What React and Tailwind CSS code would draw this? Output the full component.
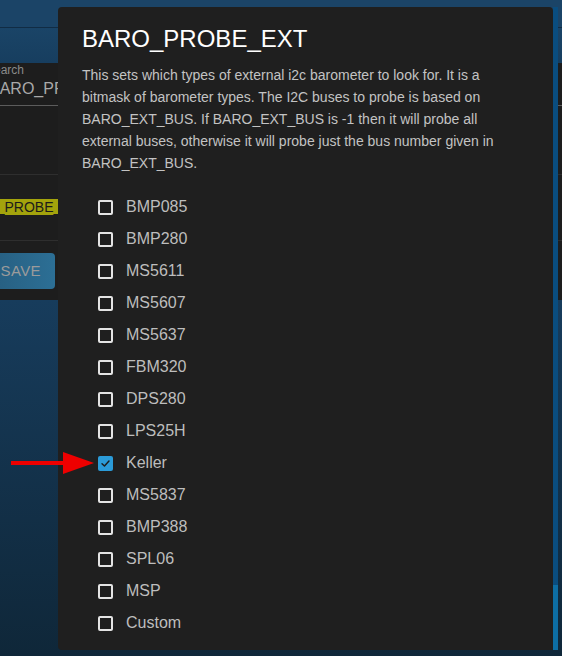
const SENSORS = [
  "BMP085",
  "BMP280",
  "MS5611",
  "MS5607",
  "MS5637",
  "FBM320",
  "DPS280",
  "LPS25H",
  "Keller",
  "MS5837",
  "BMP388",
  "SPL06",
  "MSP",
  "Custom",
]

const CHECKED = ["Keller"]

function Checkbox({ checked }) {
  if (checked) {
    return (
      <span className="flex size-[15px] items-center justify-center rounded-[2px] bg-[#2b9bd8]">
        <svg width="11" height="11" viewBox="0 0 12 12" fill="none">
          <path d="M2.2 6.2 L4.9 8.8 L9.8 3.4" stroke="#1d1d1d" strokeWidth="1.6" strokeLinecap="round" strokeLinejoin="round" />
        </svg>
      </span>
    )
  }
  return <span className="box-border size-[15px] rounded-[2px] border-2 border-[#e4e4e4]" />
}

// dimmed settings page peeking out behind the dialog
function BackPage() {
  return (
    <div className="flex h-full flex-col">
      <div className="h-[27px] bg-[#1b4467]" />
      <div className="h-px bg-[#112c44]" />
      <div className="h-[35px] bg-gradient-to-b from-[#1a4467] to-[#173e5f]" />
      <div className="flex h-[237px] flex-col bg-[#1d1d1d]">
        <div className="ml-[-14px] text-[12px] leading-[14px] text-[#8a8a8a]">Search</div>
        <div className="ml-[-11px] mt-[2px] text-[16px] leading-[20px] text-[#a9a9a9]">BARO_PROBE_EXT</div>
        <div className="mt-[6px] h-px bg-[#5c5c5c]" />
        <div className="mt-[68px] h-px bg-[#2e2e2e]" />
        <div className="ml-[-44px] mt-[24px] flex">
          <span className="bg-[#a3a30c] px-px text-[14px] leading-[16px] text-[#1b1b1b]">BARO_PROBE_EXT</span>
        </div>
        <div className="mt-[25px] h-px bg-[#2e2e2e]" />
        <div className="ml-[-30px] mt-[12px] flex h-[36px] w-[85px] items-center justify-end rounded bg-gradient-to-r from-[#25597a] to-[#2c6f95] pr-[14px] text-[15px] tracking-wide text-[#9b9b9b]">
          SAVE
        </div>
      </div>
      <div className="flex-1 bg-gradient-to-b from-[#173c5c] to-[#0f2739]" />
    </div>
  )
}

export default function App() {
  return (
    <div className="relative h-[656px] w-[562px] overflow-hidden bg-[#0f2739] font-['Liberation_Sans',Arial,sans-serif]">
      <BackPage />

      {/* dialog */}
      <div className="absolute left-[58px] top-[7px] flex h-[643px] w-[500px]">
        <div className="flex-1 rounded-l rounded-tr bg-[#1f1f1f] px-6 pt-4">
          <h2 className="text-[24px] leading-8 text-white">BARO_PROBE_EXT</h2>
          <p className="mt-[9px] text-[14px] leading-[22px] text-[#c3c3c3]">
            This sets which types of external i2c barometer to look for. It is a bitmask of barometer types. The I2C buses
            to probe is based on BARO_EXT_BUS. If BARO_EXT_BUS is -1 then it will probe all external buses, otherwise it
            will probe just the bus number given in BARO_EXT_BUS.
          </p>
          <div className="mt-[17px] flex flex-col">
            {SENSORS.map((name) => (
              <label key={name} className="flex h-8 items-center gap-[13px] pl-4">
                <Checkbox checked={CHECKED.includes(name)} />
                <span className="text-[16px] text-[#bdbdbd]">{name}</span>
              </label>
            ))}
          </div>
        </div>
        {/* scrollbar */}
        <div className="flex w-[5px] flex-col bg-[#0a4d7f]">
          <div className="flex-1" />
          <div className="h-[65px] bg-[#0d6ea4]" />
        </div>
      </div>

      {/* red pointer arrow */}
      <svg className="absolute left-0 top-[440px]" width="100" height="46" viewBox="0 440 100 46">
        <rect x="11" y="461" width="55" height="4" fill="#ee0000" />
        <polygon points="63,452 94,463 63,474" fill="#ee0000" />
      </svg>
    </div>
  )
}
